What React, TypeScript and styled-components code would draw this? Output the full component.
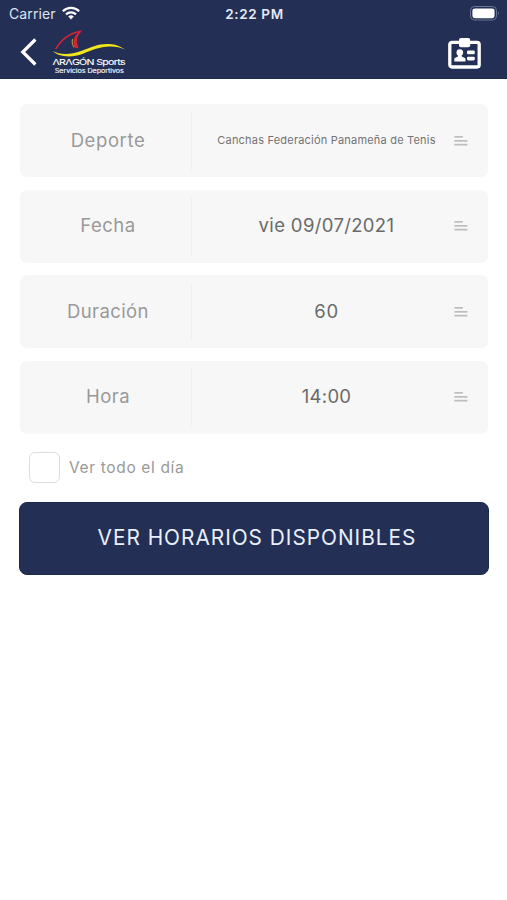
import React from "react";
import styled, { createGlobalStyle } from "styled-components";

const GlobalStyle = createGlobalStyle`
  * { box-sizing: border-box; }
  html, body { margin: 0; background: #fff; }
  body { font-family: Inter, "Liberation Sans", sans-serif; }
`;

const Screen = styled.div`
  width: 507px;
  height: 900px;
  overflow: hidden;
  background: #fff;
`;

const Header = styled.header`
  height: 79px;
  background: #232f55;
  border-bottom: 1px solid #1a2c50;
  color: #fff;
`;

const StatusBar = styled.div`
  height: 28px;
  display: grid;
  grid-template-columns: 1fr auto 1fr;
  align-items: center;
  padding: 0 7px 0 9px;
`;

const Carrier = styled.div`
  display: flex;
  align-items: center;
  gap: 6px;
  font-size: 14px;
  line-height: 28px;
  letter-spacing: 0.1px;
  color: #dfe4f0;

  svg {
    margin-top: -2px;
  }
`;

const Clock = styled.div`
  font-size: 13.5px;
  font-weight: 600;
  letter-spacing: 0.65px;
  color: #e6eaf5;
`;

const BatterySlot = styled.div`
  display: flex;
  justify-content: flex-end;
  padding-bottom: 2px;
`;

const NavBar = styled.div`
  height: 50px;
  display: flex;
  align-items: flex-start;
  padding: 0 26px 0 20px;
`;

const IconButton = styled.button<{ $top: number }>`
  display: flex;
  margin: ${(p) => p.$top}px 0 0;
  padding: 0;
  border: 0;
  background: none;
  color: #fff;
`;

const Logo = styled.svg`
  display: block;
  margin: 1px auto 0 13px;
`;

const Form = styled.main`
  display: flex;
  flex-direction: column;
  padding: 25px 19px 0 20px;
`;

const Fields = styled.div`
  display: grid;
  gap: 12.5px;
`;

const Field = styled.div`
  height: 73px;
  display: grid;
  grid-template-columns: 171px 1px 1fr 14px;
  align-items: center;
  padding-right: 20px;
  border-radius: 7px;
  background: #f7f7f7;
`;

const Label = styled.div<{ $spacing: number }>`
  padding: 0 0 2px 5px;
  text-align: center;
  font-size: 18.5px;
  letter-spacing: ${(p) => p.$spacing}px;
  color: #999;
`;

const Divider = styled.div`
  height: 58px;
  background: #efefef;
`;

const Value = styled.div<{ $small?: boolean; $spacing: number }>`
  padding: 0 0 ${(p) => (p.$small ? 1 : 2)}px 7px;
  text-align: center;
  white-space: nowrap;
  font-size: ${(p) => (p.$small ? 11 : 18.5)}px;
  letter-spacing: ${(p) => p.$spacing}px;
  color: ${(p) => (p.$small ? "#737373" : "#6a6a6a")};
`;

const CheckRow = styled.label`
  display: flex;
  align-items: center;
  gap: 9px;
  height: 31px;
  margin: 18.5px 0 0 9px;
  font-size: 15.5px;
  letter-spacing: 0.65px;
  color: #999;
`;

const CheckBox = styled.span`
  width: 31px;
  height: 31px;
  border: 1px solid #dcdcdc;
  border-radius: 6px;
  background: #fff;
`;

const Submit = styled.button`
  height: 73px;
  margin: 19px -1px 0;
  padding: 0 0 2px 6px;
  border: 1px solid #1a2950;
  border-radius: 8px;
  background: #232f55;
  color: #eaf0fb;
  font-family: inherit;
  font-size: 20.8px;
  letter-spacing: 1px;
`;

const Wifi = () => (
  <svg width="18" height="14" viewBox="0 0 18 14" fill="none" stroke="#fff">
    <path d="M.9 5.2a11.6 11.6 0 0 1 16.2 0" strokeWidth="2.3" />
    <path d="M4 8.4a7.2 7.2 0 0 1 10 0" strokeWidth="2.2" />
    <path d="M9 13.4 6.2 10.6a4 4 0 0 1 5.6 0Z" fill="#fff" stroke="none" />
  </svg>
);

const Battery = () => (
  <svg width="30" height="15" viewBox="0 0 30 15">
    <rect x=".5" y=".5" width="26" height="13.5" rx="4" fill="none" stroke="#6c7591" />
    <rect x="2.4" y="2.4" width="22.2" height="9.8" rx="2.4" fill="#fff" />
    <path d="M28 5.2q1.8 2 0 4.2Z" fill="#8089a3" />
  </svg>
);

const Back = () => (
  <svg width="18" height="28" viewBox="0 0 18 28" fill="none" stroke="#fff">
    <path d="M15.4 1.5 2.8 14l12.6 12.5" strokeWidth="3.2" />
  </svg>
);

const Badge = () => (
  <svg width="33" height="31" viewBox="0 0 33 31" fill="#fff">
    <rect x="1.8" y="4.3" width="29.4" height="24.7" rx="2.2" fill="none" stroke="#fff" strokeWidth="3.3" />
    <rect x="11" y="0" width="11.2" height="9.3" rx="2" />
    <circle cx="11.8" cy="14.6" r="3.3" />
    <path d="M9.9 16h3.8v2.6l3.2 1.3q.6.4.6 1.1v2.4H6.3V21q0-.7.6-1.1l3-1.3Z" />
    <rect x="19" y="12.6" width="7.8" height="3.6" rx="1.3" />
    <rect x="19" y="18.8" width="7.8" height="3.6" rx="1.3" />
  </svg>
);

const Lines = () => (
  <svg width="14" height="10" viewBox="0 0 14 10" fill="#bdbdbd">
    <rect x=".4" y="0" width="8.4" height="1.7" />
    <rect x=".4" y="4" width="13" height="1.7" />
    <rect x=".4" y="7.8" width="13" height="1.7" />
  </svg>
);

const fields = [
  { label: "Deporte", labelSpacing: 0.6, value: "Canchas Federación Panameña de Tenis", spacing: 0.2, small: true },
  { label: "Fecha", labelSpacing: 0.5, value: "vie 09/07/2021", spacing: 0.35 },
  { label: "Duración", labelSpacing: 0.4, value: "60", spacing: 0.7 },
  { label: "Hora", labelSpacing: 0.5, value: "14:00", spacing: 0.3 },
];

export default function App() {
  return (
    <Screen>
      <GlobalStyle />
      <Header>
        <StatusBar>
          <Carrier>
            Carrier
            <Wifi />
          </Carrier>
          <Clock>2:22 PM</Clock>
          <BatterySlot>
            <Battery />
          </BatterySlot>
        </StatusBar>
        <NavBar>
          <IconButton $top={10} aria-label="Volver">
            <Back />
          </IconButton>
          <Logo width="78" height="46" viewBox="0 0 78 46">
            <path d="M4.6 20.2C8.500 13.500 15.500 4.500 29.300 2.400 25 7 23.500 11 26.800 19" fill="none" stroke="#d82532" strokeWidth="1.500" />
            <path d="M28.500 3C23.500 6.500 21 11 23.600 18.800L27.200 19.200C24.500 12.500 25.500 7.500 28.500 3Z" fill="#d82532" />
            <path d="M21.600 10q-1.300 4.500 1.400 8.300" fill="none" stroke="#a89a48" strokeWidth="1.100" />
            <path d="M2 22.100C8 25.800 19 26.300 30 22.100c12-4.800 18-7.600 28-7.100 7 .4 11 2.300 16.500 5.600-6-2.300-10-3.200-16-3C48 18.100 42 20.800 32 24.800c-12 4.500-25 3-30-2.700Z" fill="#f1e51d" />
            <g transform="translate(1.500 36.300) scale(1.36 1)">
              <text textLength="53.700" lengthAdjust="spacing" fill="#fff" stroke="#fff" strokeWidth=".1" fontFamily="Inter, sans-serif" fontSize="7.800">
                ΛRΛGÓN Sports
              </text>
            </g>
            <g transform="translate(3.800 44.300) scale(1.3 1)">
              <text textLength="53.100" lengthAdjust="spacing" fill="#eef1f8" stroke="#eef1f8" strokeWidth=".15" fontFamily="Inter, sans-serif" fontSize="5.500">
                Servicios Deportivos
              </text>
            </g>
          </Logo>
          <IconButton $top={10} aria-label="Credencial">
            <Badge />
          </IconButton>
        </NavBar>
      </Header>
      <Form>
        <Fields>
          {fields.map((f) => (
            <Field key={f.label}>
              <Label $spacing={f.labelSpacing}>{f.label}</Label>
              <Divider />
              <Value $small={f.small} $spacing={f.spacing}>
                {f.value}
              </Value>
              <Lines />
            </Field>
          ))}
        </Fields>
        <CheckRow>
          <CheckBox />
          Ver todo el día
        </CheckRow>
        <Submit>VER HORARIOS DISPONIBLES</Submit>
      </Form>
    </Screen>
  );
}
